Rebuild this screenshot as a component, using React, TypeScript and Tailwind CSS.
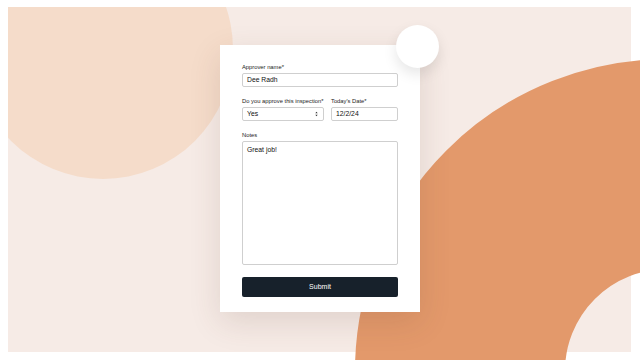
import React from "react";

const font = { fontFamily: '"Liberation Sans", Arial, Helvetica, sans-serif' };

function Label({ children }: { children: React.ReactNode }) {
  return (
    <div className="text-[5.8px] leading-[7px] text-[#1a1a1a] mb-[2px] whitespace-nowrap">
      {children}
    </div>
  );
}

export default function App() {
  return (
    <div className="relative w-[640px] h-[360px] bg-white overflow-hidden" style={font}>
      <div className="relative ml-[8px] mt-[7px] w-[623px] h-[345px] bg-[#f6ebe6] overflow-hidden">
        <div className="absolute left-[-35px] top-[-88px] w-[260px] h-[260px] rounded-full bg-[#f5dcca]" />
      </div>

      <div className="absolute left-[355px] top-[59px] w-[624px] h-[624px] rounded-full border-[210px] border-[#e3996b]" />

      <div className="absolute left-[220px] top-[45px] z-10 w-[200px] h-[267px] bg-white shadow-[0_10px_30px_rgba(90,60,40,0.14)] px-[22px] pt-[19px]">
        <div className="absolute left-[176px] top-[-20px] w-[43px] h-[43px] rounded-full bg-white shadow-[0_6px_14px_rgba(0,0,0,0.10)]" />

        <div className="mb-[1px]">
          <Label>Approver name*</Label>
        </div>
        <div className="h-[14px] border border-[#cfcfcf] rounded-[2px] flex items-center px-[4px] text-[6.8px] text-[#111]">
          Dee Radh
        </div>

        <div className="grid grid-cols-[82px_1fr] gap-x-[7px] mt-[11px]">
          <Label>Do you approve this inspection*</Label>
          <Label>Today's Date*</Label>
          <div className="h-[14px] border border-[#cfcfcf] rounded-[2px] flex items-center justify-between pl-[4px] pr-[5px] text-[6.8px] text-[#111]">
            <span>Yes</span>
            <svg width="3" height="6" viewBox="0 0 3 6">
              <path d="M0.3 2.3 L1.5 0.8 L2.7 2.3 Z M0.3 3.7 L1.5 5.2 L2.7 3.7 Z" fill="#333" />
            </svg>
          </div>
          <div className="h-[14px] border border-[#cfcfcf] rounded-[2px] flex items-center px-[4px] text-[6.8px] text-[#111]">
            12/2/24
          </div>
        </div>

        <div className="mt-[11px]">
          <Label>Notes</Label>
          <div className="h-[124px] border border-[#cfcfcf] rounded-[2px] px-[4px] pt-[4px] text-[6.8px] leading-[8px] text-[#111]">
            Great job!
          </div>
        </div>

        <div className="mt-[12px] h-[20px] rounded-[2px] bg-[#17212b] flex items-center justify-center text-white text-[7px]">
          Submit
        </div>
      </div>
    </div>
  );
}
